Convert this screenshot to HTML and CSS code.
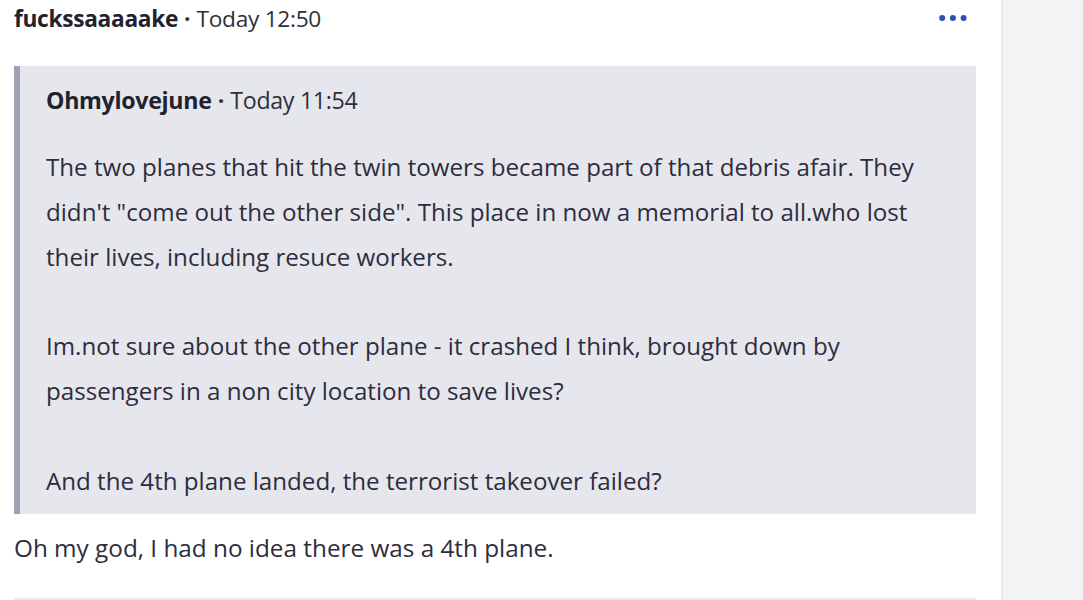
FILE: index.html
```html
<!DOCTYPE html>
<html lang="en">
<head>
<meta charset="utf-8">
<title>Comment</title>
<link rel="stylesheet" href="styles.css">
</head>
<body>
<div class="page">
  <main class="main">
    <article class="comment">
      <header class="comment-head">
        <div class="meta"><span class="author">fuckssaaaaake</span><span class="dot">·</span><span class="time">Today 12:50</span></div>
        <button class="more" aria-label="More options">
          <svg width="28" height="8" viewBox="0 0 28 8"><circle cx="3.2" cy="4" r="3"/><circle cx="13.9" cy="4" r="3"/><circle cx="24.6" cy="4" r="3"/></svg>
        </button>
      </header>
      <blockquote class="quote">
        <div class="meta quote-meta"><span class="author">Ohmylovejune</span><span class="dot">·</span><span class="time">Today 11:54</span></div>
        <p class="quote-text">The two planes that hit the twin towers became part of that debris afair. They<br>didn't "come out the other side". This place in now a memorial to all.who lost<br>their lives, including resuce workers.<br><br>Im.not sure about the other plane - it crashed I think, brought down by<br>passengers in a non city location to save lives?<br><br>And the 4th plane landed, the terrorist takeover failed?</p>
      </blockquote>
      <p class="reply">Oh my god, I had no idea there was a 4th plane.</p>
    </article>
  </main>
  <aside class="side"></aside>
</div>
</body>
</html>
```
FILE: styles.css
```css
html, body {
  margin: 0;
  padding: 0;
  background: #ffffff;
}
body {
  font-family: "Open Sans", "Noto Sans", sans-serif;
  color: #2d2d3e;
}
.page {
  display: flex;
  height: 600px;
  overflow: hidden;
}
.main {
  width: 1001px;
  flex: none;
  background: #ffffff;
  border-right: 2px solid #e9e9ee;
}
.side {
  flex: 1;
  background: #f2f3f5;
}
.comment {
  margin: 0 25px 0 14px;
  border-bottom: 2px solid #e8e8ed;
  height: 600px;
  box-sizing: border-box;
}
.comment-head {
  display: flex;
  justify-content: space-between;
  align-items: center;
  height: 36px;
}
.meta {
  font-size: 22.7px;
  display: flex;
  align-items: baseline;
}
.author {
  font-weight: 700;
  color: #22222f;
  letter-spacing: -0.3px;
}
.dot {
  margin: 0 6px;
  color: #333;
  font-weight: 700;
}
.time {
  color: #2f2f3a;
  letter-spacing: -0.3px;
}
.more {
  border: 0;
  background: none;
  padding: 0;
  margin-right: 9px;
  display: flex;
  fill: #2f4db6;
}
.quote {
  margin: 30px 0 0 0;
  background: #e6e6ed;
  border-left: 6px solid #a1a1b4;
  padding: 18px 20px 11px 26px;
}
.quote-meta {
  height: 28px;
  font-size: 23.2px;
}
.quote-text {
  margin: 33px 0 0 0;
  font-size: 24.15px;
  line-height: 44.8px;
  white-space: nowrap;
}
.reply {
  margin: 16px 0 0 0;
  font-size: 24.3px;
  line-height: 36px;
}
```
